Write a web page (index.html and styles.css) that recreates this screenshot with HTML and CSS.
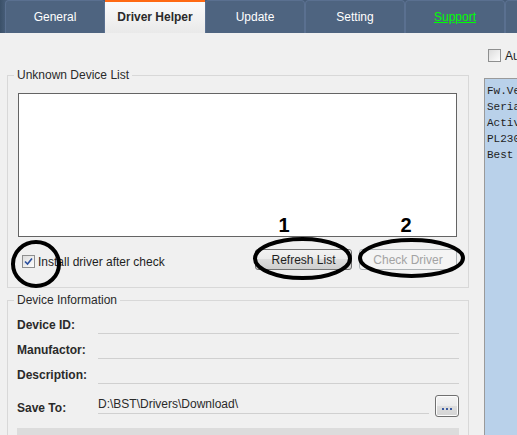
FILE: index.html
```html
<!DOCTYPE html>
<html>
<head>
    <title>Driver Helper</title>
    <meta charset="UTF-8">
    <link rel="stylesheet" href="styles.css">
</head>
<body>
    <div class="tabs">
        <div class="tab">General</div>
        <div class="tab active">Driver Helper</div>
        <div class="tab">Update</div>
        <div class="tab">Setting</div>
        <div class="tab"><a href="#" class="support">Support</a></div>
        <div class="tab"></div>
    </div>

    <div class="main">
        <div class="left">
            <fieldset class="group">
                <legend>Unknown Device List</legend>
                <div class="listbox"></div>
                <div class="actions">
                    <label class="check-row">
                        <span class="check">
                            <svg width="9" height="9" viewBox="0 0 9 9"><path d="M1 4.5 L3.5 7 L8 1.5" fill="none" stroke="#2a4f9e" stroke-width="1.6"/></svg>
                        </span>
                        Install driver after check
                    </label>
                    <button class="btn">Refresh List</button>
                    <button class="btn" disabled>Check Driver</button>
                </div>
            </fieldset>

            <fieldset class="group info">
                <legend>Device Information</legend>
                <div class="row">
                    <div class="label">Device ID:</div>
                    <div class="field"></div>
                </div>
                <div class="row">
                    <div class="label">Manufactor:</div>
                    <div class="field"></div>
                </div>
                <div class="row">
                    <div class="label">Description:</div>
                    <div class="field"></div>
                </div>
                <div class="row save">
                    <div class="label">Save To:</div>
                    <div class="field">D:\BST\Drivers\Download\</div>
                    <button class="browse"><span class="dots"><i></i><i></i><i></i></span></button>
                </div>
                <div class="progress"></div>
            </fieldset>
        </div>

        <div class="right">
            <label class="auto"><span class="check"></span>Auto</label>
            <div class="log">Fw.Version
Serial
Active
PL2303
Best</div>
        </div>

        <svg class="marks" width="517" height="402" viewBox="0 33 517 402">
            <ellipse cx="36" cy="264" rx="23" ry="22" fill="none" stroke="#000" stroke-width="4"/>
            <ellipse cx="302.5" cy="258.5" rx="47.5" ry="19.5" fill="none" stroke="#000" stroke-width="4"/>
            <ellipse cx="411.5" cy="258" rx="51.5" ry="18" fill="none" stroke="#000" stroke-width="4"/>
            <text x="284" y="232" class="num">1</text>
            <text x="406" y="232" class="num">2</text>
        </svg>
    </div>
</body>
</html>
```

FILE: styles.css
```css
body {
    margin: 0;
    width: 517px;
    height: 435px;
    overflow: hidden;
    background: #f0f0f0;
    font-family: "Liberation Sans", Arial, sans-serif;
    font-size: 12px;
    color: #1e1e1e;
}
.tabs {
    display: flex;
    height: 33px;
    padding-left: 5px;
    overflow: hidden;
    background: linear-gradient(90deg, #3a5068, #465c77 5px);
}
.tab {
    flex: 0 0 100px;
    box-sizing: border-box;
    height: 33px;
    line-height: 33px;
    text-align: center;
    color: #fff;
    background: #4e6480;
    border: 1px solid #5a7090;
    border-bottom: none;
    border-radius: 4px 4px 0 0;
}
.tab.active {
    background: linear-gradient(#fbfbfb, #e9e9e9);
    border: none;
    border-top: 2px solid #ff6a14;
    border-radius: 0;
    line-height: 31px;
    color: #2a2a2a;
    font-weight: bold;
}
.support {
    color: #00ff00;
}
.main {
    position: relative;
    display: flex;
}
.left {
    flex: 0 0 462px;
    width: 462px;
    margin-left: 7px;
    padding-top: 35px;
}
.group {
    margin: 0;
    padding: 0 11px 17px 10px;
    border: 1px solid #d8d8d8;
}
.group legend {
    padding: 0 3px;
    margin-left: -4px;
    line-height: 14px;
    color: #2a2a2a;
}
.listbox {
    height: 142px;
    margin-top: 11px;
    background: #fff;
    border: 1px solid #646464;
}
.actions {
    display: flex;
    align-items: center;
    margin-top: 12px;
    height: 21px;
}
.check-row {
    display: flex;
    align-items: center;
    gap: 3px;
    margin-left: 4px;
    margin-top: 4px;
    flex: 1;
}
.check {
    flex: 0 0 11px;
    display: flex;
    align-items: center;
    justify-content: center;
    width: 11px;
    height: 11px;
    border: 1px solid #8e8f8f;
    background: linear-gradient(135deg, #dcdcdc, #fdfdfd);
}
.btn {
    width: 97px;
    height: 21px;
    margin-left: 7px;
    padding: 0;
    font-family: inherit;
    font-size: 12px;
    color: #1e1e1e;
    border: 1px solid #707070;
    border-radius: 3px;
    background: linear-gradient(#f2f2f2, #ebebeb 50%, #dddddd 50%, #cfcfcf);
}
.btn:disabled {
    width: 98px;
    color: #a3a3a3;
    border-color: #adb2b5;
    background: #f4f4f4;
}
.info {
    margin-top: 5px;
    padding: 2px 9px 0 9px;
}
.info legend {
    margin-left: -3px;
}
.row {
    display: flex;
    align-items: flex-end;
    height: 25px;
}
.row .label {
    width: 81px;
    flex: 0 0 81px;
    font-weight: bold;
    line-height: 14px;
    padding-bottom: 2px;
    color: #2a2a2a;
}
.field {
    flex: 1;
    align-self: stretch;
    box-sizing: border-box;
    border-bottom: 1px solid #d0d0d0;
}
.row.save {
    height: 33px;
}
.row.save .label {
    padding-bottom: 2px;
}
.row.save .field {
    align-self: flex-end;
    margin-bottom: 3px;
    line-height: 14px;
    padding-bottom: 2px;
    color: #2a2a2a;
}
.browse {
    flex: 0 0 24px;
    width: 24px;
    height: 22px;
    margin-left: 6px;
    padding: 0;
    border: 1px solid #707070;
    border-radius: 3px;
    background: linear-gradient(#f4f4f4, #ebebeb 50%, #dddddd 50%, #d4d4d4);
    box-shadow: inset 0 0 0 1px #fcfcfc;
}
.dots {
    display: flex;
    justify-content: center;
    gap: 2px;
    margin-top: 6px;
}
.dots i {
    width: 2px;
    height: 2px;
    background: #3a5aa0;
}
.progress {
    margin-top: 11px;
    height: 20px;
    background: #dcdcdc;
}
.right {
    margin-left: 15px;
    padding-top: 16px;
    flex: 1;
    min-width: 0;
    overflow: hidden;
}
.auto {
    display: flex;
    align-items: center;
    gap: 4px;
    margin-left: 4px;
    height: 13px;
    white-space: nowrap;
}
.log {
    margin-top: 16px;
    height: 360px;
    padding: 4px 0 0 2px;
    background: #b9d1ea;
    border: 1px solid #9a9a9a;
    border-right: none;
    font-family: "Liberation Mono", "Courier New", monospace;
    font-size: 11px;
    line-height: 16px;
    white-space: pre;
    overflow: hidden;
    color: #1e1e1e;
}
.marks {
    position: absolute;
    left: 0;
    top: 0;
    pointer-events: none;
}
.num {
    font-family: "Liberation Sans", Arial, sans-serif;
    font-weight: bold;
    font-size: 20px;
    text-anchor: middle;
    fill: #000;
}
```
